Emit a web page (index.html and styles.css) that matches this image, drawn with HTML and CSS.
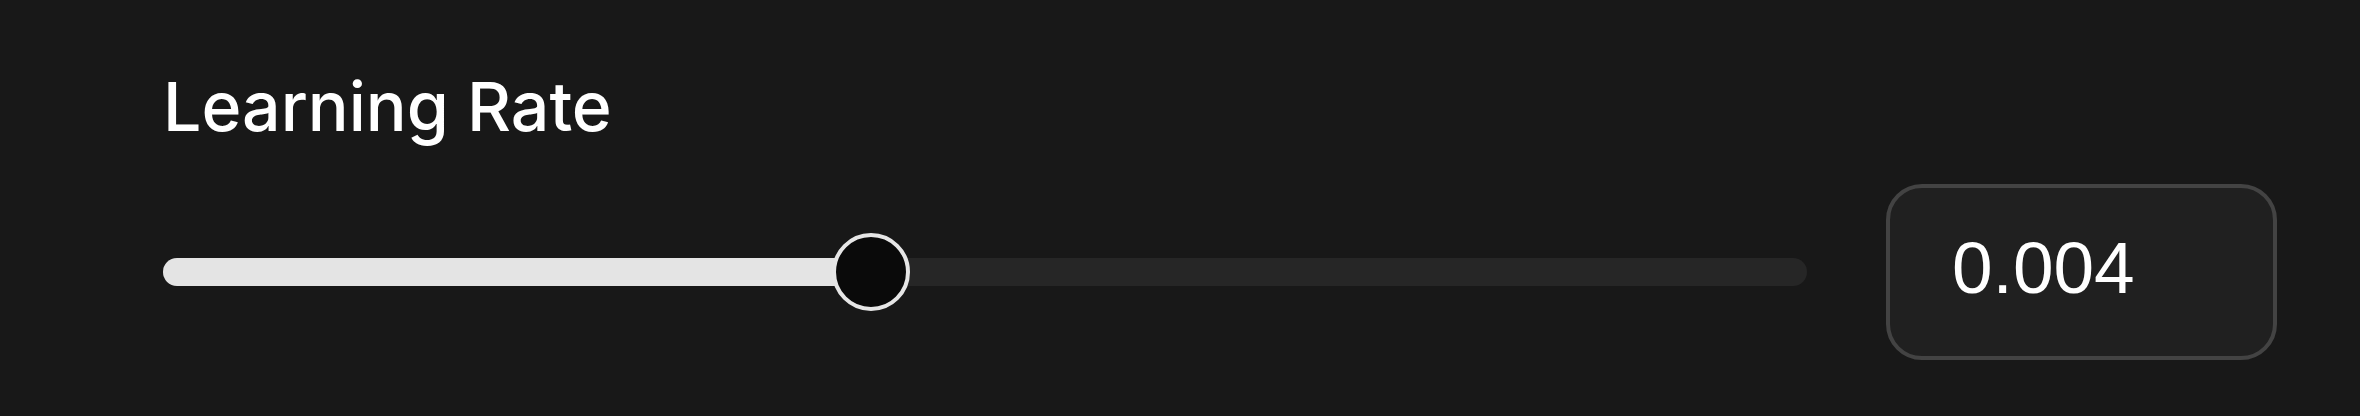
FILE: index.html
```html
<!DOCTYPE html>
<html lang="en">
<head>
  <meta charset="UTF-8" />
  <meta name="viewport" content="width=device-width, initial-scale=1.0"/>
  <title>Learning Rate</title>
  <link rel="stylesheet" href="styles.css">
</head>
<body>
  <div class="control">
    <div class="label">Learning Rate</div>
    <div class="row">
      <div class="slider">
        <div class="track">
          <div class="fill" style="width: 43.1%;"></div>
        </div>
        <div class="thumb" style="left: 43.1%;"></div>
      </div>
      <div class="value-box">
        <span class="value">0.004</span>
      </div>
    </div>
  </div>
</body>
</html>
```

FILE: styles.css
```css
body {
  margin: 0;
  background-color: #181818;
  color: #fff;
  font-family: 'Liberation Sans', Arial, sans-serif;
  height: 416px;
  overflow: hidden;
}

.control {
  padding: 66px 83px 0 163px;
}

.label {
  font-family: Inter, 'Liberation Sans', sans-serif;
  font-weight: 500;
  font-size: 68px;
  line-height: 80px;
  margin-bottom: 38px;
}

.row {
  display: flex;
  align-items: center;
  gap: 79px;
}

.slider {
  flex: 1;
  position: relative;
  height: 79px;
  display: flex;
  align-items: center;
}

.track {
  width: 100%;
  height: 28px;
  border-radius: 14px;
  background: #262626;
  overflow: hidden;
}

.fill {
  height: 100%;
  background: #e4e4e4;
}

/* thumb sits on top of the track */
.thumb {
  position: absolute;
  top: 0;
  width: 70px;
  height: 70px;
  margin-left: -39.5px;
  border: 4.5px solid #e6e6e6;
  border-radius: 50%;
  background: #0a0a0a;
}

.value-box {
  width: 391px;
  height: 176px;
  box-sizing: border-box;
  border: 4px solid #434343;
  border-radius: 36px;
  background: #202020;
  padding: 0 0 10px 62px;
  display: flex;
  align-items: center;
}

.value {
  font-family: 'Liberation Sans', Arial, sans-serif;
  font-size: 73px;
  line-height: 1;
}
```
